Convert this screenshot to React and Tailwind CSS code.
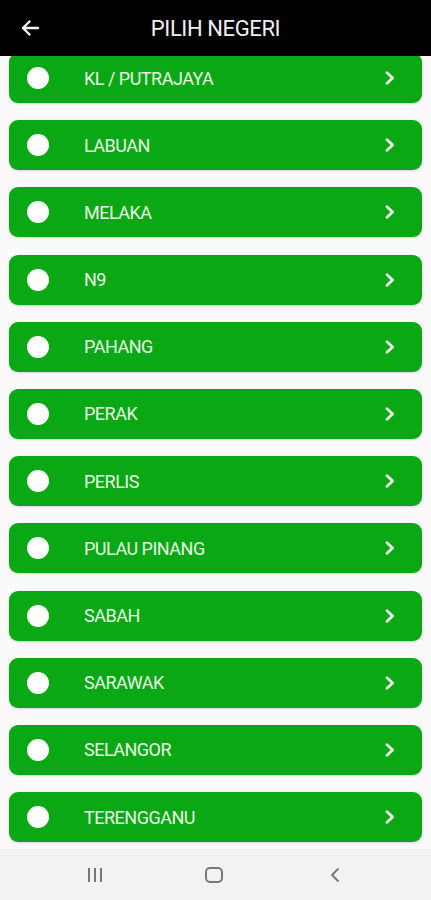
import React from "react";

const states = [
  "KL / PUTRAJAYA",
  "LABUAN",
  "MELAKA",
  "N9",
  "PAHANG",
  "PERAK",
  "PERLIS",
  "PULAU PINANG",
  "SABAH",
  "SARAWAK",
  "SELANGOR",
  "TERENGGANU",
];

function Chevron() {
  return (
    <svg width="12" height="14" viewBox="0 0 12 14" fill="none">
      <path d="M3 1.8 L8.6 7 L3 12.2" stroke="#eef9ea" strokeWidth="2.8" strokeLinecap="round" strokeLinejoin="round" />
    </svg>
  );
}

export default function App() {
  return (
    <div className="flex h-[900px] w-[431px] flex-col overflow-hidden bg-[#fafafa]" style={{ fontFamily: "Roboto, 'Noto Sans', sans-serif" }}>
      <div className="relative z-10 flex h-14 shrink-0 items-center bg-black">
        <div className="flex w-[60px] items-center pl-[20px]">
          <svg width="20" height="18" viewBox="0 0 20 18" fill="none">
            <path d="M18 9 H3 M9.5 2.5 L3 9 L9.5 15.5" stroke="#f2f2f2" strokeWidth="2.4" strokeLinecap="round" strokeLinejoin="round" />
          </svg>
        </div>
        <div className="flex-1 pr-[60px] text-center text-[22px] font-normal tracking-[-0.4px] text-[#f0f0f0]">PILIH NEGERI</div>
      </div>
      <div className="-mt-[3px] flex flex-1 flex-col gap-[17.2px] overflow-hidden px-[9px]">
        {states.map((s) => (
          <div key={s} className="flex h-[50px] shrink-0 items-center rounded-[9px] bg-[#0aa815] pl-[18px] pr-[26px] shadow-[0_1px_2px_rgba(0,0,0,0.15)]">
            <div className="h-[22px] w-[22px] shrink-0 rounded-full bg-white" />
            <div className="ml-[35px] flex-1 text-[18px] font-normal tracking-[-0.5px] text-[#e9f8e4]">{s}</div>
            <Chevron />
          </div>
        ))}
      </div>
      <div className="flex h-[51px] shrink-0 items-center bg-[#f2f2f2]">
        <div className="flex w-full items-center">
          <div className="ml-[88px] flex gap-[4px]">
            <div className="h-[14px] w-[2px] bg-[#777]" />
            <div className="h-[14px] w-[2px] bg-[#777]" />
            <div className="h-[14px] w-[2px] bg-[#777]" />
          </div>
          <div className="ml-[103px] h-[16px] w-[18px] rounded-[5px] border-2 border-[#777]" />
          <div className="ml-[106px]">
            <svg width="12" height="16" viewBox="0 0 12 16" fill="none">
              <path d="M9 2 L3 8 L9 14" stroke="#777" strokeWidth="1.8" strokeLinecap="round" strokeLinejoin="round" />
            </svg>
          </div>
        </div>
      </div>
    </div>
  );
}
